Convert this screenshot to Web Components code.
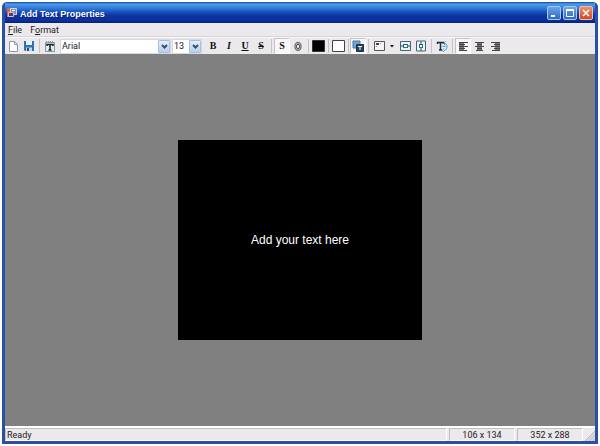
<!DOCTYPE html>
<html lang="en">
<head>
<meta charset="utf-8">
<title>Add Text Properties</title>
<style>
html,body{margin:0;height:100%}
body{background:#fff;font:9px/12px Roboto,"Liberation Sans",Arial,sans-serif;color:#222;padding:2px;box-sizing:border-box}
</style>
</head>
<body>
<app-window>
  <title-bar slot="title">Add Text Properties</title-bar>
  <menu-bar slot="menu"></menu-bar>
  <tool-bar slot="tools"></tool-bar>
  <text-stage>Add your text here</text-stage>
  <status-bar slot="status"><span>Ready</span><span slot="position">106 x 134</span><span slot="size">352 x 288</span></status-bar>
</app-window>
<script>
const define = (name, html, setup) => customElements.define(name, class extends HTMLElement {
  constructor() { super(); this.attachShadow({mode: 'open'}); }
  connectedCallback() {
    const t = document.createElement('template');
    t.innerHTML = html;
    this.shadowRoot.replaceChildren(t.content.cloneNode(true));
    if (setup) setup(this);
  }
});

const svg = (body, w = 12, h = 12) => `<svg width="${w}" height="${h}" viewBox="0 0 ${w} ${h}" fill="none" aria-hidden="true">${body}</svg>`;
const bars = (block, rows) => svg(`<path d="${block}" fill="#777"/>` + rows.map(([x, w], i) => `<path d="M${x} ${1.5 + i * 2}h${w}" stroke="#444"/>`).join(''), 12, 11);
const icons = {
  new: svg('<path d="M2.5 1.5h5l3 3v7h-8z" fill="#fff" stroke="#8d97ad"/><path d="M7.5 1.5v3h3" stroke="#8d97ad"/>', 12, 13),
  save: svg('<path d="M1 1h10v10H2l-1-1z" fill="#2f6fb4"/><path d="M3 1h6v4H3z" fill="#e8f3fb"/><path d="M3 7.500h6V11H3z" fill="#bcd8ee"/><path d="M4 8h2v3H4z" fill="#1d4e8a"/>'),
  text: svg('<path d="M1.500 2.500h9v9h-9z" fill="#e4edf1" stroke="#8297a2"/><path d="M2 1.500h8" stroke="#8b979e" stroke-dasharray="1 1"/><path d="M3 6V4.500h6V6M6 4.500V10M4.500 10h3" stroke="#18242b" stroke-width="1.500"/>', 12, 13),
  black: svg('<path d="M.5.5h12v11H.5z" fill="#000" stroke="#333"/>', 13, 12),
  white: svg('<path d="M.5.5h12v11H.5z" fill="#fff" stroke="#444"/>', 13, 12),
  layer: svg('<path d="M1 1h7v7H1z" fill="#6fa6d0" stroke="#47779f"/><path d="M4.500 4.500h7v7h-7z" fill="#27415f" stroke="#1f3147"/><path d="M6 6.500h4M8 6.500V10" stroke="#fff"/>'),
  place: svg('<path d="M1.500 1.500h10v9h-10z" fill="#f4f4f4" stroke="#555"/><path d="M3 3h3v2H3z" fill="#444"/><path d="M7 3.500h1M3 6.500h1" stroke="#999"/>', 13),
  horiz: svg('<path d="M1.500 1.500h10v9h-10z" fill="#e9f3f6" stroke="#476473"/><path d="M2 6h2.500M8.500 6H11" stroke="#20485c"/><rect x="4.500" y="4.500" width="4" height="3" fill="#fff" stroke="#37697e"/>', 13),
  vert: svg('<path d="M1.500 1h9v10h-9z" fill="#e9f3f6" stroke="#476473"/><path d="M6 1.500V4M6 8v3" stroke="#20485c"/><rect x="4.500" y="4.500" width="3" height="3" fill="#fff" stroke="#37697e"/>'),
  rotate: svg('<path d="M1 2.500h7M1.500 2v2M7.500 2v2M4.500 2.500V10M3 10h3" stroke="#17303d" stroke-width="1.500"/><path d="M8 3.500c4-1 4 7 0 7M9.500 1.500l-2 2 2 2M8 8.500l-2 2 2 1.500M6.500 6.500h3" stroke="#4a9ac9"/>'),
  left: bars('M2 1h5v9H2z', [[2,9],[2,6],[2,9],[2,6],[2,8]]),
  center: bars('M4 1h5v9H4z', [[2,9],[4,5],[2,9],[4,5],[3,7]]),
  right: bars('M6 1h5v9H6z', [[2,9],[5,6],[2,9],[5,6],[3,8]]),
  drop: svg('<path d="M1 0h4L3 2.500z" fill="#111"/>', 6, 3),
  outline: svg('<ellipse cx="6" cy="5.500" rx="3" ry="4" fill="#f4f4f4" stroke="#777" stroke-width="1.500"/><ellipse cx="6" cy="5.500" rx="1.500" ry="2.500" fill="#f4f4f4" stroke="#333"/>', 12, 11)
};

define('app-window', `<style>
  :host{display:flex;flex-direction:column;height:100%;box-sizing:border-box;border:solid #2a4fa5;border-width:0 3px 3px;border-radius:5px 5px 0 0;background:#ece9ec;overflow:hidden}
  </style><slot name="title"></slot><slot name="menu"></slot><slot name="tools"></slot><slot></slot><slot name="status"></slot>`);

define('title-bar', `<style>
  :host{display:flex;align-items:center;gap:2px;height:21px;flex:none;margin:0 -3px;padding:0 5px 0 4px;background:linear-gradient(#1546a8 0,#4d9be8 10%,#2f7ad8 30%,#1650bd 48%,#0d34a0 65%,#0c2f9c 88%,#08206f 100%);color:#fff;font:bold 9px/14px "Liberation Sans",Arial,sans-serif}
  h1{font:inherit;margin:2px 0 0;flex:1;text-shadow:1px 1px #0a2270}
  .buttons{display:flex;gap:2px}
  button{width:14px;height:14px;padding:0;border:1px solid #a9c6ee;border-radius:2px;background:linear-gradient(#6ba5e6,#2f68c4);display:grid;place-items:center}
  .close{background:linear-gradient(#ec8f6e,#cf4a22);border-color:#efc0ae}
  </style>
  ${svg('<path d="M1 1h5v9H1z" fill="#d9683f"/><path d="M4.500 1.500h6v6h-6z" fill="#7d8fc9" stroke="#e8cfd2"/><path d="M2.500 5.500h5v4h-5z" fill="#34468d" stroke="#f0b9a2"/><path d="M6 3.500h3" stroke="#fff"/>', 12, 11)}
  <h1><slot></slot></h1>
  <div class="buttons">
  <button aria-label="Minimize">${svg('<path d="M2 8h4" stroke="#fff" stroke-width="2"/>', 10, 10)}</button>
  <button aria-label="Maximize">${svg('<path d="M1.500 2.500h7v6h-7z" stroke="#fff"/><path d="M1 2h8" stroke="#fff" stroke-width="2"/>', 10, 10)}</button>
  <button class="close" aria-label="Close">${svg('<path d="M2 2l6 6M8 2L2 8" stroke="#fff" stroke-width="1.500"/>', 10, 10)}</button></div>`);

define('menu-bar', `<style>
  :host{display:block;flex:none;border-bottom:1px solid #d8d4d8}
  nav{display:flex;gap:8px;padding:0 3px;height:13px}
  button{border:0;background:none;padding:0;font:inherit;color:inherit}
  </style><nav aria-label="Main menu"><button><u>F</u>ile</button><button>F<u>o</u>rmat</button></nav>`);

define('tool-button', `<style>
  :host{display:block;flex:none;width:16px;height:16px}
  :host([slim]){width:10px}
  button{width:100%;height:100%;box-sizing:border-box;padding:0;border:1px solid transparent;background:none;color:#111;font:bold 10px/14px "Liberation Serif",serif;display:flex;align-items:center;justify-content:center}
  button[aria-pressed=true]{background:#f8f7f9;border-color:#c4c1c6 #fff #fff #c4c1c6}
  svg{flex:none}
  </style><button><slot></slot></button>`, el => {
    const b = el.shadowRoot.querySelector('button');
    b.setAttribute('aria-label', el.getAttribute('label'));
    if (el.hasAttribute('pressed')) b.setAttribute('aria-pressed', 'true');
    const icon = icons[el.getAttribute('icon')];
    if (icon) b.innerHTML = icon;
});

define('tool-separator', `<style>
  :host{display:flex;justify-content:center;flex:none;width:5px;height:14px}
  :host([narrow]){width:4px}
  :host::before{content:"";width:1px;background:#c6c3c8}
  </style>`);

define('combo-box', `<style>
  :host{display:grid;grid-template-columns:1fr 12px;flex:none;height:15px;box-sizing:border-box;border:1px solid #d3d9e2;background:#fff}
  select{grid-area:1/1/2/3;appearance:none;border:0;margin:0;padding:0 12px 0 1px;background:none;font:inherit;color:inherit;min-width:0;width:100%}
  span{grid-area:1/2;display:grid;place-items:center;pointer-events:none;border:1px solid #a9bfdc;border-radius:1px;background:linear-gradient(#e4eefa,#b9cfe9)}
  </style><select></select><span>${svg('<path d="M1 1l2.500 2.500L6 1" stroke="#37506f" stroke-width="2"/>', 7, 5)}</span>`, el => {
    const s = el.shadowRoot.querySelector('select');
    s.setAttribute('aria-label', el.getAttribute('label'));
    s.add(new Option(el.getAttribute('value')));
});

define('tool-bar', `<style>
  :host{display:flex;align-items:center;height:17px;flex:none;box-sizing:border-box;border-top:1px solid #f8f7f8;overflow:hidden}
  .font{width:111px;margin:0 1px 0 2px}
  .size{width:30px;margin-right:3px}
  i,u,s{font-weight:bold}
  </style>
  <tool-button label="New" icon="new"></tool-button><tool-button label="Save" icon="save"></tool-button><tool-separator></tool-separator>
  <tool-button label="Text" icon="text"></tool-button>
  <combo-box class="font" label="Font" value="Arial"></combo-box><combo-box class="size" label="Font size" value="13"></combo-box>
  <tool-button label="Bold">B</tool-button><tool-button label="Italic"><i>I</i></tool-button><tool-button label="Underline"><u>U</u></tool-button><tool-button label="Strikethrough"><s>S</s></tool-button>
  <tool-separator></tool-separator>
  <tool-button label="Shadow" pressed>S</tool-button><tool-button label="Outline" icon="outline"></tool-button>
  <tool-separator narrow></tool-separator><tool-button label="Text colour" icon="black"></tool-button>
  <tool-separator narrow></tool-separator><tool-button label="Background colour" icon="white"></tool-button>
  <tool-separator narrow></tool-separator><tool-button label="Transparent background" icon="layer" pressed></tool-button>
  <tool-separator></tool-separator><tool-button label="Position" icon="place"></tool-button><tool-button slim label="Position options" icon="drop"></tool-button>
  <tool-button label="Center horizontally" icon="horiz"></tool-button><tool-button label="Center vertically" icon="vert"></tool-button>
  <tool-separator></tool-separator><tool-button label="Rotate text" icon="rotate"></tool-button>
  <tool-separator></tool-separator><tool-button label="Align left" icon="left" pressed></tool-button><tool-button label="Align center" icon="center"></tool-button><tool-button label="Align right" icon="right"></tool-button>`);

define('text-stage', `<style>
  :host{display:grid;place-items:center;flex:1;min-height:0;background:#808080}
  .frame{display:grid;place-items:center;width:244px;aspect-ratio:352/288;background:#000;color:#fff;font:12px/16px "Liberation Sans",Arial,sans-serif}
  p{margin:0}
  </style><div class="frame"><p><slot></slot></p></div>`);

define('status-bar', `<style>
  :host{display:flex;gap:2px;flex:none;height:13px;border-top:2px solid #fff;line-height:12px}
  div{box-sizing:border-box;border:1px solid;border-color:#c2bfc3 #fff #fff #c2bfc3;display:flex;align-items:center;justify-content:center;width:66px}
  .message{flex:1;justify-content:flex-start;padding-left:1px}
  svg{margin-left:-1px;align-self:flex-end}
  </style><div class="message"><slot></slot></div><div><slot name="position"></slot></div><div><slot name="size"></slot></div>
  ${svg('<path d="M11 1v10H1z" fill="#dad7dc"/><path d="M1 11L11 1M5 11l6-6M8.500 11L11 8.500" stroke="#bcb9bf"/>', 11, 11)}`);
</script>
</body>
</html>
